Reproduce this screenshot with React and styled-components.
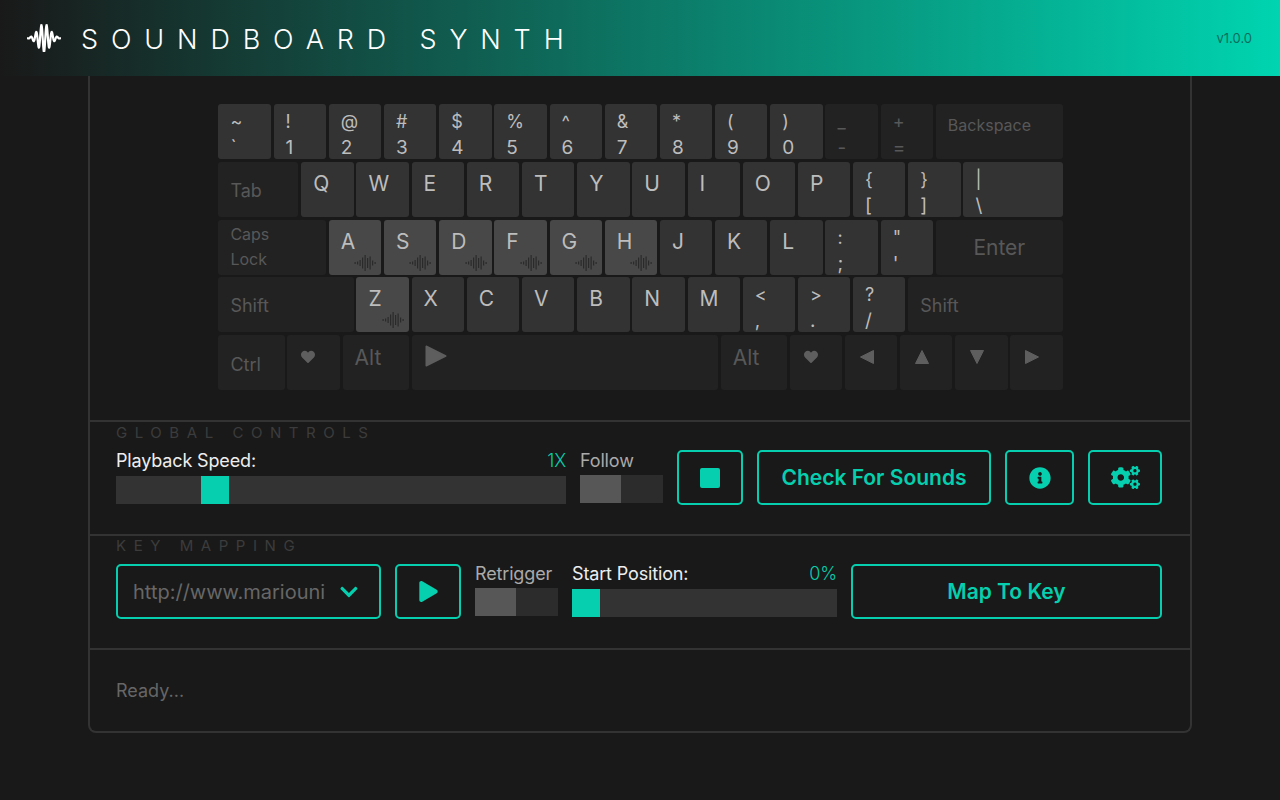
import React from 'react';
import styled, { createGlobalStyle } from 'styled-components';
import { FaInfoCircle, FaCogs, FaHeart, FaChevronDown, FaPlay } from 'react-icons/fa';

const teal = '#05cfae';
const UNIT = 55.2;
const GAP = 2.8;

const GlobalStyle = createGlobalStyle`
  html, body {
    margin: 0;
    height: 100%;
    overflow: hidden;
    background: #191919;
    font-family: Inter, "Liberation Sans", sans-serif;
  }
`;

const Header = styled.header`
  display: flex;
  align-items: center;
  height: 76px;
  padding: 0 28px 0 27px;
  box-sizing: border-box;
  background: linear-gradient(to right, #191919, #00d4b0);
`;

const Title = styled.h1`
  flex: 1;
  margin: 2px 0 0 20px;
  font-size: 27px;
  font-weight: 300;
  letter-spacing: 12.87px;
  color: #fff;
  white-space: nowrap;
`;

const Version = styled.span`
  font-size: 13px;
  color: #0b6d5d;
`;

const Panel = styled.main`
  width: 1104px;
  height: 657px;
  margin-left: 88px;
  box-sizing: border-box;
  border: 2px solid #333;
  border-top: none;
  border-radius: 0 0 8px 8px;
`;

const KeyboardSection = styled.section`
  padding: 28px 0 30px 128.4px;
  border-bottom: 2px solid #333;
`;

const Keyboard = styled.div`
  display: flex;
  flex-direction: column;
  gap: ${GAP}px;
  width: 845px;
`;

const KeyRow = styled.div`
  display: flex;
  gap: ${GAP}px;
`;

const toneColors = { dark: '#222', mid: '#333', mapped: '#484848' };

const Key = styled.div`
  position: relative;
  flex: none;
  box-sizing: border-box;
  width: ${p => p.$u * UNIT - GAP}px;
  height: 55px;
  padding: ${p => p.$top ?? 9}px 0 0 ${p => p.$left ?? 12}px;
  border-radius: 3px;
  background: ${p => toneColors[p.$tone || 'mid']};
  color: ${p => (p.$tone === 'dark' ? '#585858' : '#bdbdbd')};
  font-size: 21px;
  line-height: 25px;
`;

const CenterKey = styled(Key)`
  padding: 0;
  display: flex;
  align-items: center;
  justify-content: center;
`;

const Stack = styled.div`
  display: flex;
  flex-direction: column;
  margin-top: -4px;
  font-size: 18px;
  line-height: 26px;
`;

const LowerSymbol = styled.span`
  font-size: 19px;
`;

const SmallLabel = styled.div`
  font-size: ${p => p.$size || 18}px;
  line-height: ${p => p.$line || 25}px;
`;

const KeyIcon = styled.div`
  display: flex;
  padding: ${p => p.$pad || '0'};
  color: #5e5e5e;
`;

const WaveMark = styled.svg`
  position: absolute;
  right: 5px;
  bottom: 4px;
`;

const Section = styled.section`
  padding: ${p => p.$top || 0}px 28px 29px 26px;
  border-bottom: 2px solid #333;
`;

const SectionTitle = styled.h2`
  margin: 0;
  height: 20px;
  font-size: 15px;
  font-weight: 400;
  line-height: 20px;
  letter-spacing: 7.55px;
  color: #3c3c3c;
  white-space: nowrap;
`;

const ControlRow = styled.div`
  display: flex;
  gap: 14px;
  margin-top: ${p => p.$gap}px;
  height: 55px;
`;

const Field = styled.div`
  flex: none;
  width: ${p => p.$w}px;
`;

const FieldHead = styled.div`
  display: flex;
  justify-content: space-between;
  height: ${p => p.$h || 26}px;
  font-size: 18px;
  line-height: ${p => p.$line || 21}px;
  letter-spacing: -0.15px;
  color: ${p => (p.$dim ? '#aaa' : '#eee')};
`;

const FieldValue = styled.span`
  color: ${teal};
  font-weight: 300;
`;

const Track = styled.div`
  height: 28px;
  background: #333;
`;

const Thumb = styled.div`
  width: 28px;
  height: 28px;
  background: ${teal};
`;

const Toggle = styled.div`
  display: flex;
  height: 28px;
  background: #2c2c2c;
`;

const ToggleKnob = styled.div`
  width: 41px;
  background: #575757;
`;

const TealButton = styled.button`
  flex: ${p => (p.$w ? 'none' : '1')};
  width: ${p => (p.$w ? `${p.$w}px` : 'auto')};
  height: 55px;
  display: flex;
  align-items: center;
  justify-content: center;
  padding: 0;
  box-sizing: border-box;
  border: 2px solid ${teal};
  border-radius: 5px;
  background: transparent;
  color: ${teal};
  font-family: inherit;
  font-size: 21px;
  font-weight: 600;
`;

const StopSquare = styled.div`
  width: 20px;
  height: 20px;
  border-radius: 2px;
  background: ${teal};
`;

const Dropdown = styled.div`
  flex: none;
  width: 265px;
  height: 55px;
  display: flex;
  align-items: center;
  box-sizing: border-box;
  padding: 0 20px 0 15px;
  border: 2px solid ${teal};
  border-radius: 5px;
  color: ${teal};
`;

const DropdownText = styled.div`
  flex: 1;
  margin-right: 14px;
  font-size: 20px;
  color: #676767;
  white-space: nowrap;
`;

const Status = styled.div`
  padding: 29px 26px 0;
  font-size: 18px;
  line-height: 24px;
  color: #666;
`;

// sine wave with a bell shaped envelope, same mark as the logo
const logoPoints = Array.from({ length: 200 }, (_, i) => {
  const x = (i / 199) * 34;
  const env = Math.exp(-Math.pow((x - 17) / 8.5, 2));
  const y = 14 + 14 * env * Math.sin((x - 17) * 1.2 + 1.57);
  return `${x.toFixed(2)},${y.toFixed(2)}`;
}).join(' ');

function Logo() {
  return (
    <svg width="34" height="28" viewBox="0 0 34 28" style={{ flex: 'none' }}>
      <polyline points={logoPoints} fill="none" stroke="#fff" strokeWidth="2.2" />
    </svg>
  );
}

const waveBars = [2, 3, 6, 11, 16, 10, 13, 5, 2];

function KeyWave() {
  return (
    <WaveMark width="22" height="16" viewBox="0 0 22 16">
      {waveBars.map((h, i) => (
        <rect key={i} x={i * 2.5 + 0.5} y={8 - h / 2} width="1.2" height={h} fill="#2a2a2a" />
      ))}
    </WaveMark>
  );
}

function Triangle({ dir, size = 16 }) {
  const shapes = {
    left: '14.5,1.5 14.5,14.5 1.5,8',
    right: '1.5,1.5 1.5,14.5 14.5,8',
    up: '8,1.5 14.5,14.5 1.5,14.5',
    down: '1.5,1.5 14.5,1.5 8,14.5',
  };
  return (
    <svg width={size} height={size} viewBox="0 0 16 16">
      <polygon points={shapes[dir]} fill="currentColor" stroke="currentColor" strokeWidth="1" strokeLinejoin="round" />
    </svg>
  );
}

const numberRow = ['~`', '!1', '@2', '#3', '$4', '%5', '^6', '&7', '*8', '(9', ')0'];
const qwerty = ['Q', 'W', 'E', 'R', 'T', 'Y', 'U', 'I', 'O', 'P'];
const mappedHome = ['A', 'S', 'D', 'F', 'G', 'H'];
const plainHome = ['J', 'K', 'L'];
const bottomLetters = ['X', 'C', 'V', 'B', 'N', 'M'];

function SymbolKey({ pair, u = 1, tone }) {
  return (
    <Key $u={u} $tone={tone}>
      <Stack>
        <span>{pair[0]}</span>
        <LowerSymbol>{pair[1]}</LowerSymbol>
      </Stack>
    </Key>
  );
}

function LetterKey({ letter, mapped }) {
  return (
    <Key $u={1} $tone={mapped ? 'mapped' : 'mid'}>
      {letter}
      {mapped && <KeyWave />}
    </Key>
  );
}

export default function App() {
  return (
    <>
      <GlobalStyle />
      <Header>
        <Logo />
        <Title>SOUNDBOARD SYNTH</Title>
        <Version>v1.0.0</Version>
      </Header>
      <Panel>
        <KeyboardSection>
          <Keyboard>
            <KeyRow>
              {numberRow.map(p => <SymbolKey key={p} pair={p} />)}
              <SymbolKey pair="_-" tone="dark" />
              <SymbolKey pair="+=" tone="dark" />
              <Key $u={2.35} $tone="dark" $top={9}>
                <SmallLabel $size={16}>Backspace</SmallLabel>
              </Key>
            </KeyRow>
            <KeyRow>
              <Key $u={1.5} $tone="dark" $top={16}><SmallLabel>Tab</SmallLabel></Key>
              {qwerty.map(l => <LetterKey key={l} letter={l} />)}
              <SymbolKey pair="{[" />
              <SymbolKey pair="}]" />
              <SymbolKey pair="|\" u={1.85} />
            </KeyRow>
            <KeyRow>
              <Key $u={2} $tone="dark" $top={2}>
                <SmallLabel $size={16}>Caps</SmallLabel>
                <SmallLabel $size={16}>Lock</SmallLabel>
              </Key>
              {mappedHome.map(l => <LetterKey key={l} letter={l} mapped />)}
              {plainHome.map(l => <LetterKey key={l} letter={l} />)}
              <SymbolKey pair=":;" />
              <SymbolKey pair={`"'`} />
              <CenterKey $u={2.35} $tone="dark">Enter</CenterKey>
            </KeyRow>
            <KeyRow>
              <Key $u={2.5} $tone="dark" $top={16}><SmallLabel>Shift</SmallLabel></Key>
              <LetterKey letter="Z" mapped />
              {bottomLetters.map(l => <LetterKey key={l} letter={l} />)}
              <SymbolKey pair="<," />
              <SymbolKey pair=">." />
              <SymbolKey pair="?/" />
              <Key $u={2.85} $tone="dark" $top={16}><SmallLabel>Shift</SmallLabel></Key>
            </KeyRow>
            <KeyRow>
              <Key $u={1.25} $tone="dark" $top={17}><SmallLabel>Ctrl</SmallLabel></Key>
              <Key $u={1} $tone="dark" $top={15} $left={14}><KeyIcon><FaHeart size={14} /></KeyIcon></Key>
              <Key $u={1.25} $tone="dark" $top={10}>Alt</Key>
              <Key $u={5.6} $tone="dark" $top={9}>
                <KeyIcon><Triangle dir="right" size={24} /></KeyIcon>
              </Key>
              <Key $u={1.25} $tone="dark" $top={10}>Alt</Key>
              <Key $u={1} $tone="dark" $top={15} $left={14}><KeyIcon><FaHeart size={14} /></KeyIcon></Key>
              <Key $u={1} $tone="dark" $top={14}><KeyIcon $pad="0 0 0 2px"><Triangle dir="left" /></KeyIcon></Key>
              <Key $u={1} $tone="dark" $top={14}><KeyIcon $pad="0 0 0 2px"><Triangle dir="up" /></KeyIcon></Key>
              <Key $u={1} $tone="dark" $top={14}><KeyIcon $pad="0 0 0 2px"><Triangle dir="down" /></KeyIcon></Key>
              <Key $u={1} $tone="dark" $top={14}><KeyIcon $pad="0 0 0 2px"><Triangle dir="right" /></KeyIcon></Key>
            </KeyRow>
          </Keyboard>
        </KeyboardSection>

        <Section $top={1}>
          <SectionTitle>GLOBAL CONTROLS</SectionTitle>
          <ControlRow $gap={7}>
            <Field $w={450}>
              <FieldHead>
                <span>Playback Speed:</span>
                <FieldValue>1X</FieldValue>
              </FieldHead>
              <Track>
                <Thumb style={{ marginLeft: 85 }} />
              </Track>
            </Field>
            <Field $w={83}>
              <FieldHead $h={25} $dim>Follow</FieldHead>
              <Toggle><ToggleKnob /></Toggle>
            </Field>
            <TealButton $w={66}><StopSquare /></TealButton>
            <TealButton $w={234}>Check For Sounds</TealButton>
            <TealButton $w={69}><FaInfoCircle size={22} /></TealButton>
            <TealButton $w={74}><FaCogs size={29} /></TealButton>
          </ControlRow>
        </Section>

        <Section>
          <SectionTitle>KEY MAPPING</SectionTitle>
          <ControlRow $gap={8}>
            <Dropdown>
              <DropdownText>http://www.mariouni</DropdownText>
              <FaChevronDown size={20} />
            </Dropdown>
            <TealButton $w={66}><FaPlay size={21} /></TealButton>
            <Field $w={83}>
              <FieldHead $h={24} $line={19} $dim>Retrigger</FieldHead>
              <Toggle><ToggleKnob /></Toggle>
            </Field>
            <Field $w={265}>
              <FieldHead $h={25} $line={19}>
                <span>Start Position:</span>
                <FieldValue>0%</FieldValue>
              </FieldHead>
              <Track>
                <Thumb />
              </Track>
            </Field>
            <TealButton>Map To Key</TealButton>
          </ControlRow>
        </Section>

        <Status>Ready...</Status>
      </Panel>
    </>
  );
}
